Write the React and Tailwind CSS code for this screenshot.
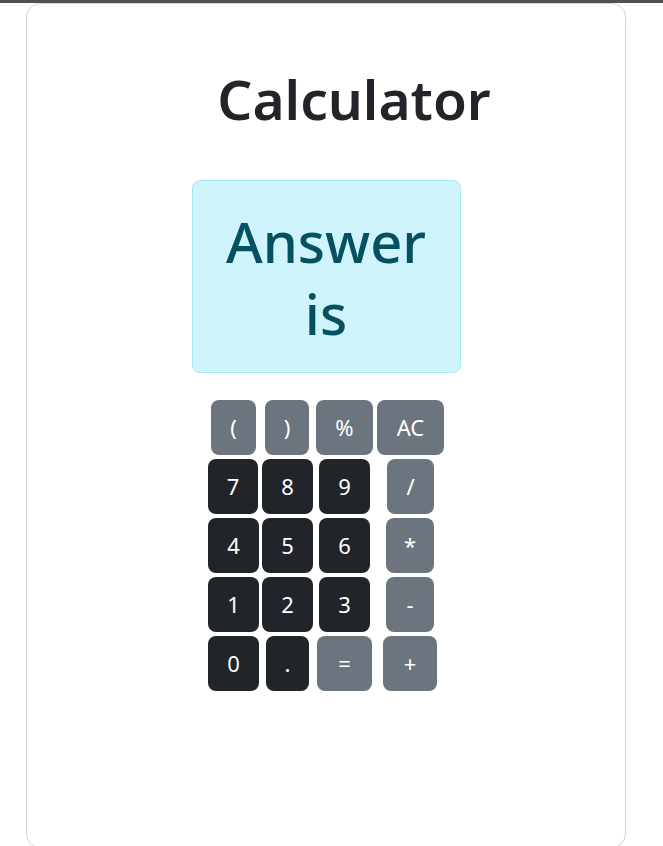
import React, { useState } from "react";

const dark = "bg-[#212529]";
const gray = "bg-[#6c757d]";

const rows = [
  [
    { label: "(", cls: `ml-[3px] w-[45px] ${gray}` },
    { label: ")", cls: `ml-[9px] w-[44px] ${gray}` },
    { label: "%", cls: `ml-[7px] w-[57px] ${gray}` },
    { label: "AC", cls: `ml-[4px] w-[67px] ${gray}` },
  ],
  [
    { label: "7", cls: `w-[50px] ${dark}` },
    { label: "8", cls: `ml-[4px] w-[51px] ${dark}` },
    { label: "9", cls: `ml-[6px] w-[51px] ${dark}` },
    { label: "/", cls: `ml-[17px] w-[47px] ${gray}` },
  ],
  [
    { label: "4", cls: `w-[51px] ${dark}` },
    { label: "5", cls: `ml-[3px] w-[51px] ${dark}` },
    { label: "6", cls: `ml-[6px] w-[51px] ${dark}` },
    { label: "*", cls: `ml-[16px] w-[48px] ${gray}` },
  ],
  [
    { label: "1", cls: `w-[51px] ${dark}` },
    { label: "2", cls: `ml-[3px] w-[51px] ${dark}` },
    { label: "3", cls: `ml-[6px] w-[51px] ${dark}` },
    { label: "-", cls: `ml-[16px] w-[48px] ${gray}` },
  ],
  [
    { label: "0", cls: `w-[51px] ${dark}` },
    { label: ".", cls: `ml-[7px] w-[43px] ${dark}` },
    { label: "=", cls: `ml-[8px] w-[55px] ${gray}` },
    { label: "+", cls: `ml-[11px] w-[54px] ${gray}` },
  ],
];

export default function App() {
  const [answer] = useState("");

  return (
    <div className="min-h-screen bg-white font-['Noto_Sans','Open_Sans',sans-serif]">
      <div className="h-[3px] bg-[#505050]" />
      <div className="ml-[26px] w-[600px] h-[845px] border border-[#d3d3d3] rounded-[14px] flex flex-col items-center">
        <h1 className="mt-[59px] pl-[56px] text-[55px] leading-[72px] font-semibold text-[#212529]">
          Calculator
        </h1>
        <div className="mt-[45px] w-[269px] h-[193px] bg-[#cff4fc] border border-[#9eeaf9] rounded-[8px] flex items-center justify-center text-center">
          <div className="text-[56px] leading-[72px] font-medium text-[#055160] px-4">
            Answer is {answer}
          </div>
        </div>
        <div className="mt-[27px] w-[236px] flex flex-col gap-[4px]">
          {rows.map((row, i) => (
            <div key={i} className="flex">
              {row.map((b) => (
                <button
                  key={b.label}
                  className={`${b.cls} h-[55px] rounded-[8px] text-white text-[22px] flex items-center justify-center`}
                >
                  {b.label}
                </button>
              ))}
            </div>
          ))}
        </div>
      </div>
    </div>
  );
}
